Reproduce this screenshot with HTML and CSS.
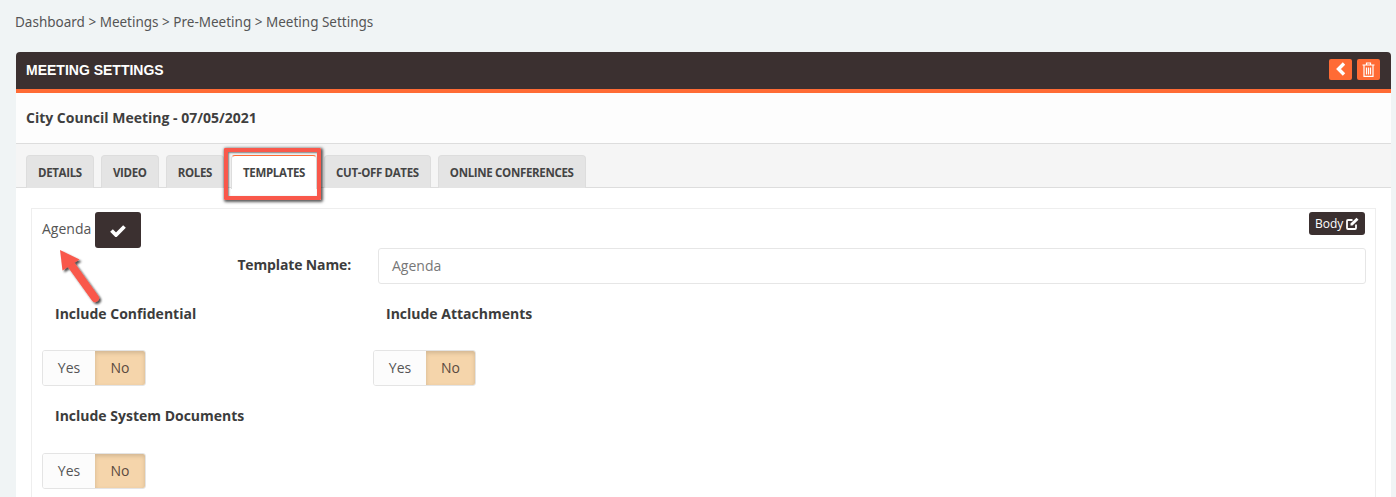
FILE: index.html
```html
<!DOCTYPE html>
<html lang="en">
<head>
<meta charset="utf-8">
<title>Meeting Settings</title>
<link rel="stylesheet" href="styles.css">
</head>
<body>
<nav class="crumbs">Dashboard &gt; Meetings &gt; Pre-Meeting &gt; Meeting Settings</nav>
<main class="panel">
  <header class="panel-head">
    <h1>MEETING SETTINGS</h1>
    <div class="head-actions">
      <button class="act"><svg width="12" height="14" viewBox="0 0 12 14"><path d="M9 1.500 3.500 7 9 12.500" fill="none" stroke="#fff" stroke-width="3.400"/></svg></button>
      <button class="act"><svg width="13" height="15" viewBox="0 0 13 15" fill="none" stroke="#fff" stroke-width="1.200"><path d="M0.500 3H12.500M4.500 3V1H8.500V3M2 3V14.400H11V3M4.500 5.500V12.500M6.500 5.500V12.500M8.500 5.500V12.500"/></svg></button>
    </div>
  </header>
  <div class="meeting-title">City Council Meeting - 07/05/2021</div>
  <div class="tabs">
    <span class="tab">DETAILS</span>
    <span class="tab">VIDEO</span>
    <span class="tab">ROLES</span>
    <span class="tab active">TEMPLATES</span>
    <span class="tab">CUT-OFF DATES</span>
    <span class="tab">ONLINE CONFERENCES</span>
  </div>
  <section class="content">
    <div class="box">
      <div class="box-top">
        <div class="agenda"><span class="agenda-name">Agenda</span><button class="check"><svg width="16" height="13" viewBox="0 0 16 13"><path d="M1.500 6.500 6 11 14.500 2.500" fill="none" stroke="#fff" stroke-width="3.800"/></svg></button></div>
        <button class="body-btn">Body <svg width="13" height="13" viewBox="0 0 13 13" fill="none"><path d="M10 7.500V11a1 1 0 0 1-1 1H2a1 1 0 0 1-1-1V4a1 1 0 0 1 1-1h4.500" stroke="#fff" stroke-width="1.800"/><path d="M4.500 8.500V6.500L10.500 .8l2 2-6 5.700z" fill="#fff"/></svg></button>
      </div>
      <div class="name-row">
        <label class="name-label">Template Name:</label>
        <div class="input">Agenda</div>
      </div>
      <div class="opts">
        <div class="opt">
          <div class="opt-label">Include Confidential</div>
          <div class="toggle"><span class="yes">Yes</span><span class="no">No</span></div>
        </div>
        <div class="opt">
          <div class="opt-label">Include Attachments</div>
          <div class="toggle"><span class="yes">Yes</span><span class="no">No</span></div>
        </div>
        <div class="opt">
          <div class="opt-label">Include System Documents</div>
          <div class="toggle"><span class="yes">Yes</span><span class="no">No</span></div>
        </div>
      </div>
    </div>
  </section>
</main>
<div class="mark-box"></div>
<svg class="mark-arrow" width="60" height="64" viewBox="0 0 60 64">
  <defs><filter id="sh" x="-30%" y="-30%" width="170%" height="170%"><feDropShadow dx="2" dy="2" stdDeviation="1.300" flood-color="#000" flood-opacity=".7"/></filter></defs>
  <g filter="url(#sh)">
    <path d="M41 53 18 21" stroke="#f9584b" stroke-width="8" stroke-linecap="round"/>
    <path d="M6 5 25.500 14.500 8.500 25.500Z" fill="#f9584b"/>
  </g>
</svg>
</body>
</html>
```
FILE: styles.css
```css
* { box-sizing: border-box; }
html, body { height: 497px; overflow: hidden; }
body {
  margin: 0;
  background: #f0f4f5;
  font-family: "Open Sans", sans-serif;
  color: #3c3c3c;
  position: relative;
}
button { border: 0; padding: 0; font: inherit; }
.crumbs {
  height: 52px;
  padding: 13px 0 0 15px;
  font-family: "Noto Sans", sans-serif;
  font-size: 13.5px;
  line-height: 18px;
  color: #555;
}
.panel {
  margin: 0 5px 0 16px;
  background: #fff;
  border-radius: 4px 4px 0 0;
  height: 445px;
  overflow: hidden;
}
.panel-head {
  height: 41px;
  background: #3b3030;
  border-bottom: 4px solid #ff6b35;
  display: flex;
  align-items: center;
  justify-content: space-between;
  padding: 0 11px 0 10px;
}
.panel-head h1 {
  margin: -1px 0 0;
  font-family: "Liberation Sans", sans-serif;
  font-size: 14px;
  font-weight: 700;
  color: #fff;
}
.head-actions { display: flex; gap: 5px; margin-top: -3px; }
.act {
  width: 23px;
  height: 21px;
  background: #ff6b35;
  border-radius: 2px;
  display: flex;
  align-items: center;
  justify-content: center;
}
.meeting-title {
  height: 51px;
  background: #fdfdfd;
  border-bottom: 1px solid #ddd;
  padding: 15px 0 0 10px;
  font-size: 14px;
  line-height: 20px;
  font-weight: 700;
  color: #3f3f3f;
}
.tabs {
  height: 44px;
  background: #f5f5f5;
  border-bottom: 1px solid #ddd;
  padding: 11px 0 0 10px;
  display: flex;
  gap: 7px;
}
.tab {
  height: 33px;
  padding: 0 11px;
  background: #e4e4e4;
  border: 1px solid #ddd;
  border-bottom: 0;
  border-radius: 4px 4px 0 0;
  font-size: 11.5px;
  font-weight: 700;
  line-height: 34px;
  color: #444;
  letter-spacing: -0.33px;
}
.tab.active { background: #fff; border-top: 1px solid #ff6b35; height: 34px; }
.content { padding: 20px 15px 0; }
.box {
  border: 1px solid #eee;
  height: 300px;
  padding: 3px 10px 0 10px;
}
.box-top { display: flex; justify-content: space-between; align-items: flex-start; height: 36px; }
.agenda { display: flex; align-items: center; gap: 4px; font-size: 14px; color: #555; }
.agenda-name { padding-bottom: 3px; }
.check {
  width: 46px;
  height: 36px;
  background: #3b3030;
  border-radius: 3px;
  display: flex;
  align-items: center;
  justify-content: center;
}
.body-btn {
  display: flex;
  align-items: center;
  gap: 3px;
  height: 23px;
  width: 56px;
  padding-left: 6px;
  background: #3b3030;
  color: #fff;
  border-radius: 3px;
  font-size: 12px;
}
.name-row { display: flex; align-items: center; }
.name-label {
  flex: none;
  width: 309px;
  padding-bottom: 3px;
  text-align: right;
  font-size: 14px;
  font-weight: 700;
  letter-spacing: -0.14px;
  color: #3c3c3c;
}
.input {
  flex: none;
  margin-left: 27px;
  width: 988px;
  height: 36px;
  border: 1px solid #e6e6e6;
  border-radius: 3px;
  padding: 0 13px;
  line-height: 33px;
  font-size: 14px;
  color: #777;
}
.opts { display: grid; grid-template-columns: 331px 1fr; }
.opt { height: 103px; }
.opt-label {
  padding: 20px 0 0 13px;
  font-size: 14px;
  line-height: 20px;
  font-weight: 700;
  color: #3c3c3c;
  height: 66px;
}
.toggle {
  display: flex;
  width: 104px;
  height: 36px;
  border: 1px solid #e4e4e4;
  border-radius: 3px;
  overflow: hidden;
  font-size: 14px;
  line-height: 34px;
  text-align: center;
  color: #555;
}
.yes { width: 52px; background: #fcfcfc; }
.no { flex: 1; background: #f5d5ab; color: #5a4a40; box-shadow: inset 0 2px 4px rgba(0,0,0,.15); }
.opt:nth-child(2) .toggle { width: 103px; }
.opt:nth-child(3) { grid-column: 1; }
.opt:nth-child(3) .opt-label { padding-top: 19px; }
.mark-box {
  position: absolute;
  left: 224px;
  top: 148px;
  width: 97px;
  height: 52px;
  border: 4px solid #f9584b;
  box-shadow: 1px 1px 3px 1px rgba(0,0,0,.65), inset 1px 1px 2px rgba(0,0,0,.5);
  border-radius: 1px;
}
.mark-arrow { position: absolute; left: 54px; top: 245px; }
```
